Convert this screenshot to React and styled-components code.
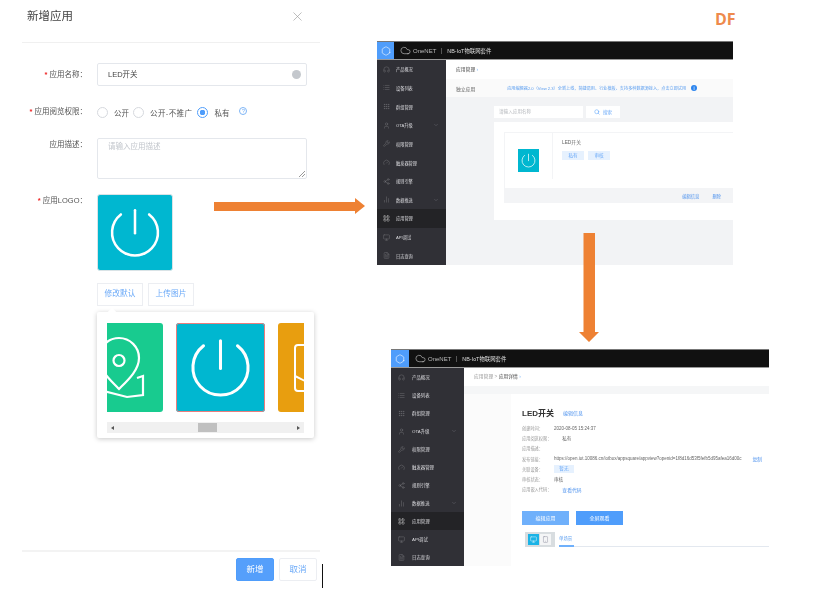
import styled, { createGlobalStyle } from "styled-components";
import {
  Headphones, List, Grip, User, ChevronDown, Wrench, Gauge, Share2,
  BarChart2, LayoutGrid, Monitor, FileText, Cloud, Hexagon, Search, X, Smartphone,
} from "lucide-react";

const GlobalStyle = createGlobalStyle`
  html, body { margin: 0; padding: 0; background: #fff; }
  body { font-family: "Liberation Sans", "Noto Sans CJK SC", sans-serif; overflow: hidden; }
  * { box-sizing: border-box; }
`;

const menu = [
  { name: "产品概况", icon: Headphones },
  { name: "设备列表", icon: List },
  { name: "群组管理", icon: Grip },
  { name: "OTA升级", icon: User, more: true },
  { name: "权限管理", icon: Wrench },
  { name: "触发器管理", icon: Gauge },
  { name: "规则引擎", icon: Share2 },
  { name: "数据推送", icon: BarChart2, more: true },
  { name: "应用管理", icon: LayoutGrid, active: true },
  { name: "API调试", icon: Monitor },
  { name: "日志查询", icon: FileText },
];

const PowerIcon = () => (
  <svg viewBox="0 0 100 100" width="100%" height="100%">
    <g fill="none" stroke="#fff" strokeWidth="3.4" strokeLinecap="round">
      <path d="M30.9 25.6 A31 31 0 1 0 69.1 25.6" />
      <path d="M50 20 V51" />
    </g>
  </svg>
);

const PinIcon = () => (
  <svg viewBox="0 0 89 89" width="89" height="89">
    <g fill="none" stroke="#fff" strokeWidth="2.2">
      <path d="M45 66 C36 57 25 47 25 35 A20 20 0 0 1 65 35 C65 47 54 57 45 66 Z" />
      <circle cx="45" cy="37.5" r="5.5" />
      <path d="M30 68 L53 74 L69 72 V53 L63 55" />
    </g>
  </svg>
);

const DeviceIcon = () => (
  <svg viewBox="0 0 89 89" width="89" height="89">
    <g fill="none" stroke="#fff" strokeWidth="2">
      <path d="M40 22 H20 A3 3 0 0 0 17 25 V65 A3 3 0 0 0 20 68 H40" />
      <path d="M17 53 L27 58" />
    </g>
  </svg>
);

const Side = ({ wide }) => (
  <Sidebar $wide={wide}>
    {menu.map((m) => (
      <SideItem key={m.name} $active={m.active} $wide={wide}>
        <m.icon size={7} strokeWidth={1.5} />
        <span>{m.name}</span>
        {m.more && <ChevronDown size={6} strokeWidth={1.5} />}
      </SideItem>
    ))}
  </Sidebar>
);

const TopBar = ({ wide }) => (
  <Bar $wide={wide}>
    <BarLogo $wide={wide}><Hexagon size={10} strokeWidth={1.4} /></BarLogo>
    <Cloud size={11} strokeWidth={1.2} />
    <BarBrand>OneNET</BarBrand>
    <BarRule />
    <BarTitle>NB-IoT物联网套件</BarTitle>
  </Bar>
);

export default function App() {
  return (
    <Page>
      <GlobalStyle />
      <Dialog>
        <DialogHead>
          <DialogTitle>新增应用</DialogTitle>
          <X size={15} strokeWidth={1} color="#999" />
        </DialogHead>
        <Form>
          <Row $h={23} $gap={20}>
            <Label $req>应用名称：</Label>
            <TextField>
              LED开关
              <ClearDot />
            </TextField>
          </Row>
          <Row $h={12} $gap={20}>
            <Label $req>应用阅览权限：</Label>
            <Radios>
              <Radio /><RadioText>公开</RadioText>
              <Radio /><RadioText $wide>公开-不推广</RadioText>
              <Radio $on /><RadioText>私有</RadioText>
              <Help>?</Help>
            </Radios>
          </Row>
          <Row $h={41} $gap={15}>
            <Label $top>应用描述：</Label>
            <TextBox>
              请输入应用描述
              <Grabber />
            </TextBox>
          </Row>
          <Row $h={77} $gap={12}>
            <Label $req $top>应用LOGO：</Label>
            <LogoBox><PowerIcon /></LogoBox>
          </Row>
          <Row $h={23} $gap={6}>
            <Label />
            <LinkButtons>
              <LinkButton>修改默认</LinkButton>
              <LinkButton>上传图片</LinkButton>
            </LinkButtons>
          </Row>
          <Row $h={126}>
            <Label />
            <Popover>
              <Tiles>
                <Tile $bg="#18cb8f"><PinIcon /></Tile>
                <Tile $bg="#00b7d0" $picked><PowerIcon /></Tile>
                <Tile $bg="#e89e0f"><DeviceIcon /></Tile>
              </Tiles>
              <Scrollbar>
                <ScrollArrow $left />
                <Thumb />
                <ScrollArrow />
              </Scrollbar>
            </Popover>
          </Row>
        </Form>
        <DialogFoot>
          <FootButton $primary>新增</FootButton>
          <FootButton>取消</FootButton>
        </DialogFoot>
      </Dialog>

      <Shots>
        <ListWindow>
          <TopBar />
          <WindowBody>
            <Side />
            <ListMain>
              <Crumb>应用管理 <b>›</b></Crumb>
              <NoticeBar>
                <span>独立应用</span>
                <Notice>应用编辑器2.0（View 2.3）全新上线，简捷易用、行业模板、支持多种数据源接入，点击立即试用</Notice>
                <InfoDot>i</InfoDot>
              </NoticeBar>
              <SearchRow>
                <SearchInput>请输入应用名称</SearchInput>
                <SearchButton><Search size={6} strokeWidth={2} />搜索</SearchButton>
              </SearchRow>
              <AppPanel>
                <AppCard>
                  <AppCardBody>
                    <AppThumb><MiniLogo><PowerIcon /></MiniLogo></AppThumb>
                    <AppInfo>
                      <AppName>LED开关</AppName>
                      <Tags>
                        <Tag>私有</Tag>
                        <Tag>审核</Tag>
                      </Tags>
                    </AppInfo>
                  </AppCardBody>
                  <AppCardFoot>
                    <FootLink>编辑信息</FootLink>
                    <FootLink>删除</FootLink>
                  </AppCardFoot>
                </AppCard>
              </AppPanel>
            </ListMain>
          </WindowBody>
        </ListWindow>

        <DetailWindow>
          <TopBar wide />
          <WindowBody>
            <Side wide />
            <DetailMain>
              <DetailCrumb>应用管理 &gt; <strong>应用详情</strong> <b>›</b></DetailCrumb>
              <DetailStage>
                <DetailPanel>
                  <DetailHead>
                    <h2>LED开关</h2>
                    <BlueText>编辑信息</BlueText>
                  </DetailHead>
                  <Facts>
                    <Fact><dt>创建时间：</dt><dd>2020-08-05 15:24:37</dd></Fact>
                    <Fact><dt>应用阅览权限：</dt><dd>私有</dd></Fact>
                    <Fact><dt>应用描述：</dt></Fact>
                    <Fact>
                      <dt>发布链接：</dt>
                      <dd>https://open.iot.10086.cn/iotbox/appsquare/appview?openid=1f8d16d53f5fefb5d95afea16d00c</dd>
                      <CopyLink>复制</CopyLink>
                    </Fact>
                    <Fact><dt>关联设备：</dt><Tag $wide>暂无</Tag></Fact>
                    <Fact><dt>审核状态：</dt><dd>审核</dd></Fact>
                    <Fact><dt>应用嵌入代码：</dt><BlueText>查看代码</BlueText></Fact>
                  </Facts>
                  <DetailButtons>
                    <SolidButton $light>编辑应用</SolidButton>
                    <SolidButton>全屏观看</SolidButton>
                  </DetailButtons>
                  <TabRow>
                    <ViewToggle>
                      <ToggleKey $on><Monitor size={7} strokeWidth={1.5} /></ToggleKey>
                      <ToggleKey><Smartphone size={7} strokeWidth={1.5} /></ToggleKey>
                    </ViewToggle>
                    <TabLine><TabName>单场景</TabName></TabLine>
                  </TabRow>
                </DetailPanel>
              </DetailStage>
            </DetailMain>
          </WindowBody>
        </DetailWindow>
      </Shots>

      <Mark>DF</Mark>
      <ArrowRight viewBox="0 0 151 16" width="151" height="16">
        <path d="M0 4 H141 V0 L151 8 L141 16 V13 H0 Z" fill="#ee8133" />
      </ArrowRight>
      <ArrowDown viewBox="0 0 20 109" width="20" height="109">
        <path d="M4.5 0 H16 V99 H20 L10 109 L0 99 H4.5 Z" fill="#ee8133" />
      </ArrowDown>
      <Caret />
      <CursorLine />
    </Page>
  );
}

const Page = styled.div`
  position: relative;
  display: flex;
  width: 823px;
  height: 602px;
  overflow: hidden;
  background: #fff;
`;

/* ---- dialog on the left ---- */
const Dialog = styled.div`
  width: 298px;
  height: 588px;
  margin-left: 22px;
  flex: none;
  display: flex;
  flex-direction: column;
  filter: blur(0.45px);
`;
const DialogHead = styled.div`
  height: 43px;
  flex: none;
  display: flex;
  justify-content: space-between;
  padding: 9px 15px 0 5px;
  border-bottom: 1px solid #f0f0f0;
`;
const DialogTitle = styled.div`
  font-size: 11.5px;
  line-height: 14px;
  color: #444;
`;
const Form = styled.div`
  flex: 1;
  padding-top: 20px;
`;
const Row = styled.div`
  display: flex;
  height: ${(p) => p.$h}px;
  margin-bottom: ${(p) => p.$gap || 0}px;
  align-items: ${(p) => (p.$h < 30 ? "center" : "flex-start")};
`;
const Label = styled.div`
  width: 65px;
  flex: none;
  margin-right: 10px;
  text-align: right;
  font-size: 7.5px;
  line-height: 10px;
  white-space: nowrap;
  color: #555;
  margin-top: ${(p) => (p.$top ? "2px" : "0")};
  &::before {
    content: "${(p) => (p.$req ? "* " : "")}";
    color: #e22;
    font-weight: bold;
  }
`;
const TextField = styled.div`
  position: relative;
  width: 210px;
  height: 23px;
  padding-left: 10px;
  border: 1px solid #e4e7ec;
  border-radius: 2px;
  font-size: 7.5px;
  line-height: 21px;
  color: #444;
`;
const ClearDot = styled.i`
  position: absolute;
  right: 5px;
  top: 6px;
  width: 9px;
  height: 9px;
  border-radius: 50%;
  background: #c4c8cd;
`;
const Radios = styled.div`
  display: flex;
  align-items: center;
  height: 12px;
`;
const Radio = styled.i`
  width: 11px;
  height: 11px;
  flex: none;
  border-radius: 50%;
  border: 1px solid ${(p) => (p.$on ? "#4f9dfb" : "#d5d8dd")};
  background: ${(p) => (p.$on ? "radial-gradient(circle, #4f9dfb 0 2.6px, #fff 3px)" : "#fff")};
`;
const RadioText = styled.span`
  font-size: 7.5px;
  color: #555;
  margin: 0 ${(p) => (p.$wide ? 5 : 4)}px 0 6px;
  letter-spacing: ${(p) => (p.$wide ? "0.4px" : "0")};
  white-space: nowrap;
`;
const Help = styled.i`
  width: 8px;
  height: 8px;
  margin: -3px 0 0 6px;
  border: 1px solid #7db4f5;
  border-radius: 50%;
  font: normal 6px/6px "Liberation Sans", sans-serif;
  text-align: center;
  color: #7db4f5;
`;
const TextBox = styled.div`
  position: relative;
  width: 210px;
  height: 41px;
  padding: 3px 10px;
  border: 1px solid #e4e7ec;
  border-radius: 2px;
  font-size: 7.5px;
  line-height: 10px;
  color: #c2c6cc;
`;
const Grabber = styled.i`
  position: absolute;
  right: 1px;
  bottom: 1px;
  width: 6px;
  height: 6px;
  background: linear-gradient(135deg, transparent 45%, #999 45% 55%, transparent 55% 72%, #999 72% 82%, transparent 82%);
`;
const LogoBox = styled.div`
  width: 76px;
  height: 77px;
  background: #00b7d0;
  border-radius: 3px;
  border: 1px solid #d9e3e6;
`;
const LinkButtons = styled.div`
  display: flex;
  gap: 5px;
`;
const LinkButton = styled.div`
  width: 46px;
  height: 23px;
  border: 1px solid #eceef2;
  font-size: 7.7px;
  line-height: 20px;
  text-align: center;
  color: #6aa9f8;
`;
const Popover = styled.div`
  width: 217px;
  height: 126px;
  padding: 11px 10px 0;
  flex: none;
  background: #fff;
  border-radius: 2px;
  box-shadow: 0 1px 5px rgba(0, 0, 0, 0.22);
`;
const Tiles = styled.div`
  display: flex;
  gap: 13px;
  width: 197px;
  height: 89px;
  overflow: hidden;
  & > :first-child { margin-left: -33px; }
`;
const Tile = styled.div`
  width: 89px;
  height: 89px;
  flex: none;
  background: ${(p) => p.$bg};
  border-radius: 3px;
  outline: ${(p) => (p.$picked ? "1px solid #ea7d7d" : "none")};
  outline-offset: -1px;
`;
const Scrollbar = styled.div`
  display: flex;
  align-items: center;
  justify-content: space-between;
  width: 197px;
  height: 11px;
  margin-top: 10px;
  padding: 0 3px;
  background: #f0f0f0;
`;
const ScrollArrow = styled.i`
  width: 0;
  height: 0;
  border: 2.5px solid transparent;
  border-left: 3px solid ${(p) => (p.$left ? "transparent" : "#555")};
  border-right: 3px solid ${(p) => (p.$left ? "#555" : "transparent")};
  margin: ${(p) => (p.$left ? "0 0 0 -2px" : "0 -2px 0 0")};
`;
const Thumb = styled.i`
  width: 19px;
  height: 9px;
  margin-left: 4px;
  background: #c0c0c0;
`;
const DialogFoot = styled.div`
  height: 38px;
  flex: none;
  display: flex;
  justify-content: flex-end;
  gap: 5px;
  padding: 6px 3px 0 0;
  border-top: 2px solid #f3f3f3;
`;
const FootButton = styled.div`
  width: 38px;
  height: 23px;
  border-radius: 2px;
  border: 1px solid ${(p) => (p.$primary ? "#4f9dfb" : "#eceef2")};
  background: ${(p) => (p.$primary ? "#559ffb" : "#fff")};
  color: ${(p) => (p.$primary ? "#fff" : "#6aa9f8")};
  font-size: 8.5px;
  line-height: 21px;
  text-align: center;
`;

/* ---- screenshots on the right ---- */
const Shots = styled.div`
  margin-left: 57px;
  padding-top: 41px;
  filter: blur(0.5px);
`;
const ListWindow = styled.div`
  width: 356px;
  height: 224px;
  display: flex;
  flex-direction: column;
  background: #f2f3f5;
`;
const DetailWindow = styled.div`
  width: 378px;
  height: 217px;
  margin: 84px 0 0 14px;
  display: flex;
  flex-direction: column;
  background: #fff;
`;
const Bar = styled.div`
  display: flex;
  align-items: center;
  flex: none;
  height: 19px;
  background: #111;
  color: #ddd;
  border-top: 1px solid #777;
  border-bottom: 1px solid #999;
`;
const BarLogo = styled.div`
  width: ${(p) => (p.$wide ? 18 : 17)}px;
  height: 100%;
  margin-right: 6px;
  display: flex;
  align-items: center;
  justify-content: center;
  background: #4f9dfb;
  color: #fff;
`;
const BarBrand = styled.span`
  margin-left: 2px;
  font-size: 6px;
  color: #bbb;
`;
const BarRule = styled.i`
  width: 1px;
  height: 6px;
  margin: 0 5px;
  background: #555;
`;
const BarTitle = styled.span`
  font-size: 5.4px;
  color: #ddd;
`;
const WindowBody = styled.div`
  flex: 1;
  display: flex;
  min-height: 0;
`;
const Sidebar = styled.div`
  width: ${(p) => (p.$wide ? 73 : 69)}px;
  flex: none;
  display: flex;
  flex-direction: column;
  background: #303036;
`;
const SideItem = styled.div`
  flex: 1;
  display: flex;
  align-items: center;
  gap: ${(p) => (p.$wide ? 7 : 6)}px;
  padding: 0 7px 0 ${(p) => (p.$wide ? 7 : 6)}px;
  font-size: ${(p) => (p.$wide ? 4.4 : 4.2)}px;
  white-space: nowrap;
  color: #dcdce0;
  background: ${(p) => (p.$active ? "#232326" : "transparent")};
  svg { color: ${(p) => (p.$active ? "#ddd" : "#77777d")}; flex: none; }
  svg:last-child:not(:first-child) { margin-left: auto; }
`;

const ListMain = styled.div`
  flex: 1;
  min-width: 0;
  display: flex;
  flex-direction: column;
`;
const Crumb = styled.div`
  height: 19px;
  padding-left: 10px;
  background: #fff;
  font-size: 4.8px;
  line-height: 19px;
  color: #444;
  b { color: #7db4f5; font-weight: normal; }
`;
const NoticeBar = styled.div`
  height: 18px;
  display: flex;
  align-items: center;
  padding-left: 10px;
  background: #fafafa;
  font-size: 4.8px;
  color: #555;
  white-space: nowrap;
`;
const Notice = styled.span`
  margin-left: 32px;
  color: #5b9ef0;
  font-size: 4.15px;
`;
const InfoDot = styled.i`
  width: 6px;
  height: 6px;
  margin-left: 5px;
  border-radius: 50%;
  background: #2b84ee;
  color: #fff;
  font: normal 5px/6px "Liberation Sans", sans-serif;
  text-align: center;
`;
const SearchRow = styled.div`
  display: flex;
  gap: 3px;
  height: 25px;
  padding: 9px 0 4px 48px;
`;
const SearchInput = styled.div`
  width: 89px;
  padding-left: 5px;
  background: #fff;
  font-size: 4.6px;
  line-height: 12px;
  color: #b5b8bd;
`;
const SearchButton = styled.div`
  width: 34px;
  display: flex;
  align-items: center;
  justify-content: center;
  gap: 3px;
  background: #fff;
  font-size: 4.6px;
  color: #6aa9f8;
  svg { color: #4f9dfb; }
`;
const AppPanel = styled.div`
  width: 239px;
  height: 98px;
  margin-left: 48px;
  padding: 10px 0 17px 10px;
  background: #fff;
`;
const AppCard = styled.div`
  height: 100%;
  display: flex;
  flex-direction: column;
  border-top: 1px solid #f3f4f6;
  border-left: 1px solid #f3f4f6;
`;
const AppCardBody = styled.div`
  flex: 1;
  display: flex;
`;
const AppThumb = styled.div`
  width: 48px;
  height: 46px;
  padding: 16px 0 0 13px;
  border-right: 1px solid #f3f4f6;
`;
const MiniLogo = styled.div`
  width: 21px;
  height: 23px;
  background: #00b7d0;
`;
const AppInfo = styled.div`
  padding: 7px 0 0 9px;
`;
const AppName = styled.div`
  font-size: 4.8px;
  line-height: 6px;
  color: #666;
`;
const Tags = styled.div`
  display: flex;
  gap: 4px;
  margin-top: 5px;
`;
const Tag = styled.span`
  display: inline-block;
  width: ${(p) => (p.$wide ? 20 : 22)}px;
  height: ${(p) => (p.$wide ? 8 : 9)}px;
  background: #e6f1fe;
  font-size: 4.6px;
  line-height: ${(p) => (p.$wide ? 8 : 9)}px;
  text-align: center;
  color: #6aa9f8;
`;
const AppCardFoot = styled.div`
  height: 15px;
  flex: none;
  display: flex;
  align-items: center;
  justify-content: flex-end;
  gap: 13px;
  padding-right: 12px;
  background: #f3f4f6;
`;
const BlueText = styled.span`
  font-size: 4.8px;
  color: #4f93ee;
  white-space: nowrap;
`;
const FootLink = styled(BlueText)`
  font-size: 4.3px;
`;

const DetailMain = styled.div`
  flex: 1;
  min-width: 0;
  display: flex;
  flex-direction: column;
`;
const DetailCrumb = styled.div`
  height: 18px;
  padding-left: 10px;
  font-size: 4.8px;
  line-height: 18px;
  color: #999;
  strong { color: #444; font-weight: normal; }
  b { color: #7db4f5; font-weight: normal; }
`;
const DetailStage = styled.div`
  flex: 1;
  padding: 8px 0 0 47px;
  background: linear-gradient(#f5f6f7 8px, #fbfbfb 8px);
`;
const DetailPanel = styled.div`
  height: 100%;
  padding: 11px 0 0 11px;
  background: #fff;
`;
const DetailHead = styled.div`
  display: flex;
  align-items: center;
  gap: 9px;
  height: 14px;
  h2 {
    margin: 0;
    font-size: 8px;
    font-weight: bold;
    color: #333;
  }
  span { font-size: 5px; }
`;
const Facts = styled.dl`
  margin: 4px 0 0;
`;
const Fact = styled.div`
  display: flex;
  align-items: center;
  height: 10.2px;
  font-size: 4.5px;
  white-space: nowrap;
  dt { color: #999; margin-right: 11px; font-size: 4.2px; }
  dd { margin: 0; color: #666; }
`;
const CopyLink = styled(BlueText)`
  margin-left: 11px;
`;
const DetailButtons = styled.div`
  display: flex;
  gap: 7px;
  margin-top: 17px;
`;
const SolidButton = styled.div`
  width: 47px;
  height: 14px;
  background: ${(p) => (p.$light ? "#6fb0fb" : "#4f9dfb")};
  font-size: 5px;
  line-height: 14px;
  text-align: center;
  color: #fff;
`;
const TabRow = styled.div`
  display: flex;
  margin: 7px 0 0 3px;
`;
const ViewToggle = styled.div`
  display: flex;
  gap: 1px;
  height: 15px;
  padding: 2px 4px 2px 3px;
  background: #d8dde0;
`;
const ToggleKey = styled.div`
  width: 11px;
  display: flex;
  align-items: center;
  justify-content: center;
  background: ${(p) => (p.$on ? "#1bb3e6" : "#f4f5f6")};
  color: ${(p) => (p.$on ? "#fff" : "#889")};
`;
const TabLine = styled.div`
  flex: 1;
  margin-left: 4px;
  height: 15px;
  border-bottom: 1px solid #e3e8ef;
`;
const TabName = styled.div`
  width: 15px;
  height: 15px;
  border-bottom: 2px solid #6fb0fb;
  font-size: 4.4px;
  line-height: 13px;
  white-space: nowrap;
  color: #5b9ef0;
`;

/* ---- things lying over the page ---- */
const Mark = styled.div`
  position: absolute;
  left: 715px;
  top: 9px;
  font: bold 16px/20px "Open Sans", sans-serif;
  color: #ee8a4c;
`;
const ArrowRight = styled.svg`
  position: absolute;
  left: 214px;
  top: 198px;
`;
const ArrowDown = styled.svg`
  position: absolute;
  left: 579px;
  top: 233px;
`;
const Caret = styled.i`
  position: absolute;
  left: 109px;
  top: 309px;
  width: 6px;
  height: 6px;
  background: #fff;
  transform: rotate(45deg);
`;
const CursorLine = styled.i`
  position: absolute;
  left: 322px;
  top: 564px;
  width: 1px;
  height: 24px;
  background: #111;
`;
